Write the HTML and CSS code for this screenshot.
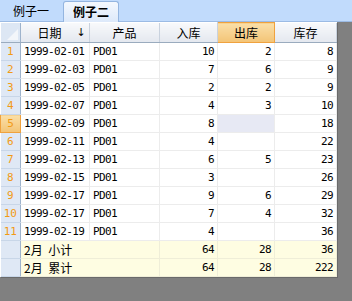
FILE: index.html
```html
<!DOCTYPE html>
<html lang="zh">
<head>
    <meta charset="UTF-8">
    <title>例子二</title>
    <link rel="stylesheet" href="styles.css">
</head>
<body>
    <div class="tabs">
        <div class="tab">例子一</div>
        <div class="tab active">例子二</div>
    </div>

    <div class="sheet">
        <table class="grid">
            <colgroup>
                <col class="c-row">
                <col class="c-date">
                <col class="c-prod">
                <col class="c-in">
                <col class="c-out">
                <col class="c-stock">
            </colgroup>
            <thead>
                <tr>
                    <th class="corner"><span class="corner-mark"></span></th>
                    <th><div class="head-sort"><span>日期</span><span class="sort">↓</span></div></th>
                    <th>产品</th>
                    <th>入库</th>
                    <th class="current">出库</th>
                    <th>库存</th>
                </tr>
            </thead>
            <tbody>
                <tr><td class="rn">1</td><td>1999-02-01</td><td>PD01</td><td class="num">10</td><td class="num">2</td><td class="num">8</td></tr>
                <tr><td class="rn">2</td><td>1999-02-03</td><td>PD01</td><td class="num">7</td><td class="num">6</td><td class="num">9</td></tr>
                <tr><td class="rn">3</td><td>1999-02-05</td><td>PD01</td><td class="num">2</td><td class="num">2</td><td class="num">9</td></tr>
                <tr><td class="rn">4</td><td>1999-02-07</td><td>PD01</td><td class="num">4</td><td class="num">3</td><td class="num">10</td></tr>
                <tr><td class="rn current">5</td><td>1999-02-09</td><td>PD01</td><td class="num">8</td><td class="num focus"></td><td class="num">18</td></tr>
                <tr><td class="rn">6</td><td>1999-02-11</td><td>PD01</td><td class="num">4</td><td class="num"></td><td class="num">22</td></tr>
                <tr><td class="rn">7</td><td>1999-02-13</td><td>PD01</td><td class="num">6</td><td class="num">5</td><td class="num">23</td></tr>
                <tr><td class="rn">8</td><td>1999-02-15</td><td>PD01</td><td class="num">3</td><td class="num"></td><td class="num">26</td></tr>
                <tr><td class="rn">9</td><td>1999-02-17</td><td>PD01</td><td class="num">9</td><td class="num">6</td><td class="num">29</td></tr>
                <tr><td class="rn">10</td><td>1999-02-17</td><td>PD01</td><td class="num">7</td><td class="num">4</td><td class="num">32</td></tr>
                <tr><td class="rn">11</td><td>1999-02-19</td><td>PD01</td><td class="num">4</td><td class="num"></td><td class="num">36</td></tr>
                <tr class="total"><td class="rn"></td><td colspan="2"><span class="cjk">2月 小计</span></td><td class="num">64</td><td class="num">28</td><td class="num">36</td></tr>
                <tr class="total"><td class="rn"></td><td colspan="2"><span class="cjk">2月 累计</span></td><td class="num">64</td><td class="num">28</td><td class="num">222</td></tr>
            </tbody>
        </table>
    </div>
</body>
</html>
```

FILE: styles.css
```css
html, body {
    margin: 0;
    height: 100%;
}
body {
    background-color: #808080;
    font-family: 'DejaVu Sans Mono', 'Noto Sans CJK SC', monospace;
    font-size: 11px;
    color: #000;
    overflow: hidden;
}

/* tab strip */
div.tabs {
    display: flex;
    align-items: flex-end;
    gap: 5px;
    height: 21px;
    padding-left: 4px;
    background-color: #c1dbfc;
    border-bottom: 1px solid #9cbbe4;
}
div.tab {
    height: 20px;
    line-height: 20px;
    padding: 0 9px;
    font-family: 'Noto Sans CJK SC', sans-serif;
    font-size: 12px;
}
div.tab.active {
    font-weight: bold;
    background: linear-gradient(#f4f8fe, #dde9fa);
    border: 1px solid #94b5e0;
    border-bottom: none;
    border-radius: 3px 3px 0 0;
    margin-bottom: -1px;
    height: 20px;
}

/* grid */
table.grid {
    border-collapse: collapse;
    table-layout: fixed;
    width: 336px;
    background-color: #fff;
    box-shadow: 1px 1px 0 #6a6a6a;
}
col.c-row { width: 20px; }
col.c-date { width: 69px; }
col.c-prod { width: 70px; }
col.c-in { width: 58px; }
col.c-out { width: 57px; }
col.c-stock { width: 62px; }

table.grid th {
    height: 19px;
    padding: 0;
    font-family: 'Noto Sans CJK SC', sans-serif;
    font-size: 12px;
    font-weight: normal;
    text-align: center;
    background: linear-gradient(#f8f9fb, #e4e8ef);
    border-right: 1px solid #c9d2de;
    border-bottom: 1px solid #9aabbe;
}
table.grid th.corner {
    position: relative;
    background: #dde7f4;
    border-right: 1px solid #9eb3cc;
}
span.corner-mark {
    position: absolute;
    right: 2px;
    bottom: 2px;
    width: 0;
    height: 0;
    border-left: 11px solid transparent;
    border-bottom: 11px solid #f3f6fa;
}
table.grid th.current {
    background: linear-gradient(#fadfa8, #f3c476);
    border: 1px solid #f0a23e;
}
div.head-sort {
    display: flex;
    align-items: center;
}
div.head-sort > span:first-child {
    flex: 1;
    padding-left: 2px;
}
span.sort {
    width: 10px;
    margin-right: 3px;
    font-family: 'DejaVu Sans', sans-serif;
    font-size: 11px;
}

table.grid td {
    height: 17px;
    padding: 0 3px;
    white-space: nowrap;
    overflow: hidden;
    border-right: 1px solid #ececec;
    border-bottom: 1px solid #ececec;
    letter-spacing: -0.6px;
}
table.grid td.num {
    text-align: right;
    padding-right: 3px;
}
table.grid td.rn {
    padding: 0;
    text-align: center;
    color: #f29a14;
    letter-spacing: 0;
    background-color: #dfe8f5;
    border-right: 1px solid #9eb3cc;
    border-bottom: 1px solid #c8d6e8;
}
table.grid td.rn.current {
    background: linear-gradient(#fadfa8, #f3c476);
    border: 1px solid #f0a23e;
}
table.grid td.focus {
    background-color: #e7e9f4;
}
table.grid tr.total td {
    background-color: #fefde2;
    border-color: #efeed8;
}
table.grid tr.total td.rn {
    background-color: #dfe8f5;
    border-right-color: #9eb3cc;
    border-bottom-color: #c8d6e8;
}
span.cjk {
    font-family: 'Noto Sans CJK SC', sans-serif;
    font-size: 12px;
    letter-spacing: 0;
    word-spacing: 3px;
}
```
